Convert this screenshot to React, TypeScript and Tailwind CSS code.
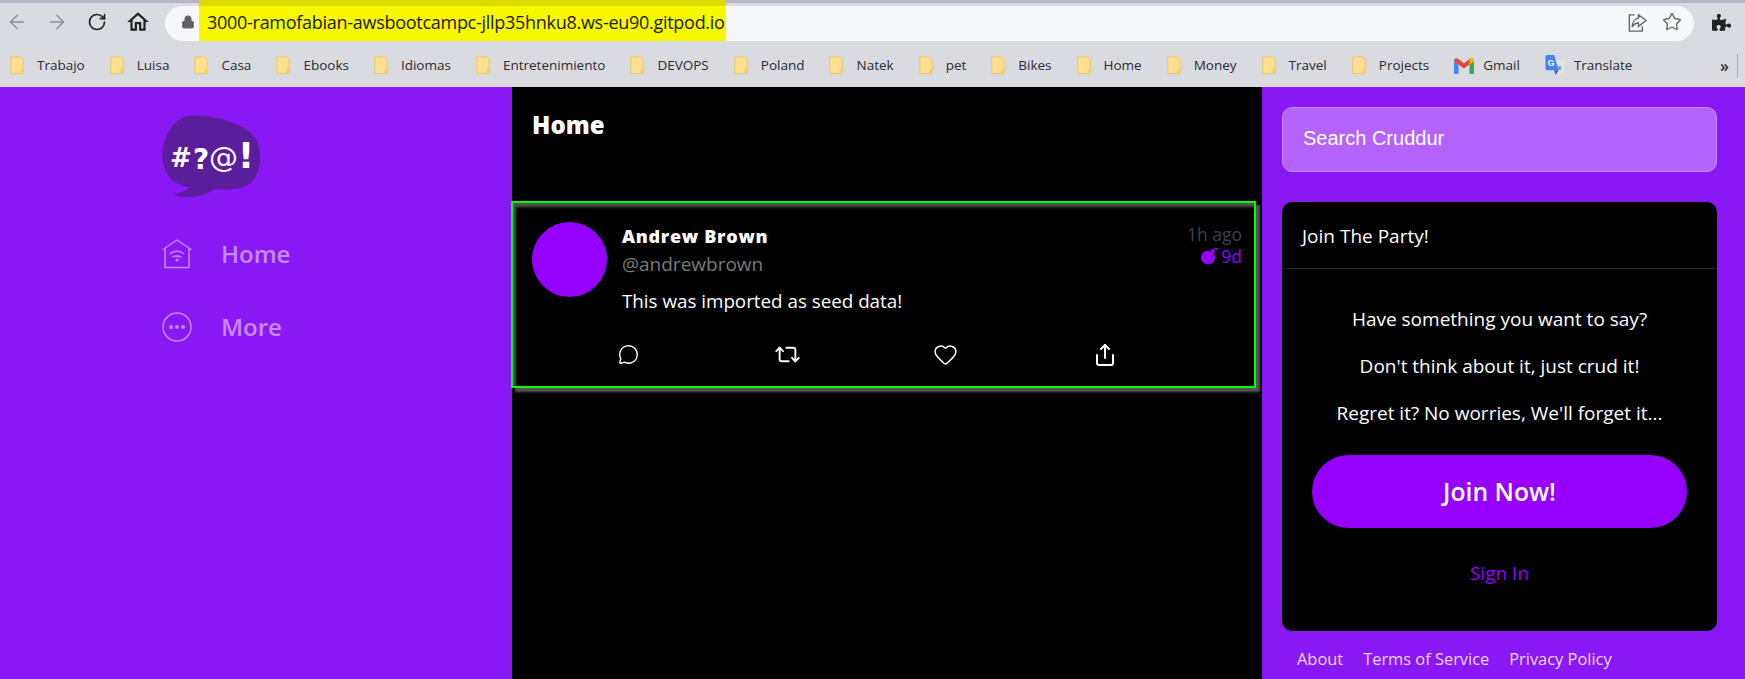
import { ArrowLeft, ArrowRight, Heart, Lock, MessageCircle, Repeat2, RotateCw, Share, Star } from "lucide-react";
import { FaPuzzlePiece } from "react-icons/fa";
import { MdOutlineHome } from "react-icons/md";

const folders = [
  "Trabajo",
  "Luisa",
  "Casa",
  "Ebooks",
  "Idiomas",
  "Entretenimiento",
  "DEVOPS",
  "Poland",
  "Natek",
  "pet",
  "Bikes",
  "Home",
  "Money",
  "Travel",
  "Projects",
];

function FolderIcon() {
  return (
    <svg viewBox="0 0 14 20" className="h-[19px] w-[14px] shrink-0">
      <path d="M0.5 1 H10.5 L13.5 3.5 V18.5 H0.5 Z" fill="#ffe08f" stroke="#e9c66c" />
      <path d="M10.5 14 H13.5 V18.5 H10.5 Z" fill="#f5cf6e" />
    </svg>
  );
}

function GmailIcon() {
  return (
    <svg viewBox="0 0 20 16" className="h-[16px] w-[20px] shrink-0">
      <path d="M0 3 V16 H4.5 V6.5 Z" fill="#4285f4" />
      <path d="M15.5 6.5 V16 H20 V3 Z" fill="#34a853" />
      <path d="M0 3 C0 0.5 2.5 -0.5 4.5 1 L10 5.5 L15.5 1 C17.5 -0.5 20 0.5 20 3 L15.5 6.5 L10 10.5 L4.5 6.5 Z" fill="#ea4335" />
      <path d="M15.5 1 C17.5 -0.5 20 0.5 20 3 L15.5 6.5 Z" fill="#fbbc04" />
    </svg>
  );
}

function TranslateIcon() {
  return (
    <svg viewBox="0 0 20 22" className="h-[21px] w-[20px] shrink-0">
      <path d="M8 5 H19 A1 1 0 0 1 20 6 V18 A1 1 0 0 1 19 19 H8 Z" fill="#dfe3ea" />
      <path d="M1.5 0 H9 L14 16 H1.5 A1.5 1.5 0 0 1 0 14.5 V1.5 A1.5 1.5 0 0 1 1.5 0 Z" fill="#4285f4" />
      <path d="M9 16 L10.5 21 L14 16 Z" fill="#3367c8" />
      <text x="2.5" y="11" fontSize="9" fontWeight="700" fill="#fff" fontFamily="Liberation Sans, sans-serif">G</text>
      <text x="13" y="16" fontSize="7" fontWeight="700" fill="#6b7280" fontFamily="Liberation Sans, sans-serif">x</text>
    </svg>
  );
}

function ShareBoxIcon() {
  return (
    <svg viewBox="0 0 24 24" className="h-[23px] w-[23px] text-[#5f6368]" fill="none" stroke="currentColor" strokeWidth="1.4">
      <path d="M9 4 H3.5 V21 H17 V16" />
      <path d="M13 4 L21 10 L13 16 V12.5 C9.5 12.5 7.5 14 6.5 17 C6.5 12 9 8 13 7.5 Z" />
    </svg>
  );
}

function Logo() {
  return (
    <svg viewBox="0 0 99 83" className="h-[83px] w-[99px]">
      <path
        d="M26 1 C40 -1 62 3 80 12 C94 19 99 30 98 46 C97 58 92 70 78 73 C70 75 60 75 53 74 C44 80 32 83 22 82 C18 82 14 81 11 79 C17 79 24 76 28 72 C14 71 4 62 1 48 C-2 30 7 5 26 1 Z"
        fill="#5a1e9d"
      />
      <g fill="#ffffff" fontFamily="DejaVu Sans, sans-serif" fontWeight="700">
        <text x="8" y="52" fontSize="26">#</text>
        <text x="31" y="54" fontSize="28">?</text>
        <text x="47" y="52" fontSize="29" fontWeight="400">@</text>
        <text x="76" y="53" fontSize="35">!</text>
      </g>
    </svg>
  );
}

function HomeWifiIcon() {
  return (
    <svg viewBox="0 0 30 30" className="h-[30px] w-[30px]" fill="none" stroke="#c68afa" strokeWidth="1.5" strokeLinejoin="round" strokeLinecap="round">
      <path d="M1 10.5 L15 1 L29 10.5" />
      <path d="M3 9.5 V28.5 H27 V9.5" />
      <path d="M8.5 14.5 C12 11.5 18 11.5 21.5 14.5" />
      <path d="M11 18 C13 16.5 17 16.5 19 18" />
      <circle cx="15" cy="21" r="0.8" fill="#c68afa" />
    </svg>
  );
}

function MoreIcon() {
  return (
    <svg viewBox="0 0 30 30" className="h-[30px] w-[30px]" fill="none" stroke="#c68afa" strokeWidth="1.5">
      <circle cx="15" cy="15" r="14" />
      <circle cx="9" cy="15" r="1.2" fill="#c68afa" />
      <circle cx="15" cy="15" r="1.2" fill="#c68afa" />
      <circle cx="21" cy="15" r="1.2" fill="#c68afa" />
    </svg>
  );
}

function BombIcon() {
  return (
    <svg viewBox="0 0 18 17" className="h-[17px] w-[18px]" fill="#9500ff">
      <circle cx="7" cy="9.5" r="7" />
      <path d="M9.5 2 L12.5 1 L14 4 L12 6 Z" />
      <path d="M12 2 C13.5 0.6 15.5 0.4 17.5 1.2" fill="none" stroke="#9500ff" strokeWidth="1.4" />
    </svg>
  );
}

export default function App() {
  return (
    <div className="flex h-screen flex-col overflow-hidden font-['Open_Sans',sans-serif] text-white">
      {/* browser chrome */}
      <div className="h-[87px] shrink-0 bg-[#dadbe0]">
        <div className="h-[3px] bg-[#b4b6c6]" />
        <div className="relative flex h-[38px] items-center">
          {/* marker highlight, darker where it crosses the toolbar */}
          <div className="absolute left-[199px] top-[-3px] h-[41px] w-[527px] bg-[#f8f800]">
            <div className="h-[6px] bg-[#dcdc00]" />
          </div>
          <div className="flex w-[165px] items-center gap-[18px] pl-[6px]">
            <ArrowLeft className="h-[22px] w-[22px] text-[#8a8d93]" strokeWidth={1.5} />
            <ArrowRight className="h-[22px] w-[22px] text-[#8a8d93]" strokeWidth={1.5} />
            <RotateCw className="ml-[1px] h-[20px] w-[20px] text-[#202124]" strokeWidth={2} />
            <MdOutlineHome className="h-[26px] w-[26px] text-[#202124]" />
          </div>
          <div className="flex h-[35px] w-[1529px] items-center rounded-full pl-[16px] pr-[12px]">
            <div className="absolute left-[165px] top-[3px] -z-0 h-[35px] w-[34px] rounded-l-full bg-[#f6f7f9]" />
            <div className="absolute left-[726px] top-[3px] h-[35px] w-[968px] rounded-r-full bg-[#f6f7f9]" />
            <Lock className="relative h-[14px] w-[14px] fill-[#5f6368] text-[#5f6368]" />
            <span className="relative ml-[12px] text-[18px] tracking-[-0.28px] text-[#202124]">
              3000-ramofabian-awsbootcampc-jllp35hnku8.ws-eu90.gitpod.io
            </span>
            <div className="relative ml-auto flex items-center gap-[13px]">
              <ShareBoxIcon />
              <Star className="h-[20px] w-[20px] text-[#5f6368]" strokeWidth={1.6} />
            </div>
          </div>
          <FaPuzzlePiece className="ml-[18px] h-[19px] w-[19px] text-[#202124]" />
        </div>
        <div className="flex h-[46px] items-center pl-[10px] pt-[3px] text-[13.5px] text-[#2b2b30]">
          <div className="flex items-center gap-[25px]">
            {folders.map((name) => (
              <div key={name} className="flex items-center gap-[13px]">
                <FolderIcon />
                <span>{name}</span>
              </div>
            ))}
            <div className="flex items-center gap-[9px]">
              <GmailIcon />
              <span>Gmail</span>
            </div>
            <div className="flex items-center gap-[9px]">
              <TranslateIcon />
              <span>Translate</span>
            </div>
          </div>
          <span className="ml-auto mr-[8px] text-[16px] font-semibold">»</span>
          <div className="mr-[7px] h-[24px] w-px bg-[#a9abb2]" />
        </div>
      </div>

      <div className="flex min-h-0 flex-1 bg-[#8a18f5]">
        {/* left nav */}
        <nav className="w-[512px] shrink-0 pl-[162px] pt-[28px]">
          <Logo />
          <div className="mt-[41px] flex h-[30px] items-center gap-[29px] text-[24px] font-semibold text-[#c68afa]">
            <HomeWifiIcon />
            <span>Home</span>
          </div>
          <div className="mt-[43px] flex h-[30px] items-center gap-[29px] text-[24px] font-semibold text-[#c68afa]">
            <MoreIcon />
            <span>More</span>
          </div>
        </nav>

        {/* feed */}
        <main className="w-[750px] shrink-0 bg-black">
          <div className="h-[114px] pl-[20px] pt-[20px] text-[24px] font-extrabold leading-[36px]">Home</div>
          <article className="ml-[-1px] flex h-[187px] w-[745px] border-2 border-[#00ff00] pl-[19px] pt-[19px] shadow-[inset_3px_4px_3px_0_#555,4px_4px_2px_0_#555]">
            <div className="h-[75px] w-[75px] shrink-0 rounded-full bg-[#9500ff]" />
            <div className="ml-[15px] flex-1">
              <div className="flex items-start justify-between pr-[12px]">
                <div>
                  <div className="mt-[-1px] text-[18px] font-extrabold leading-[30px] tracking-[0.7px]">Andrew Brown</div>
                  <div className="text-[19px] leading-[26px] text-[#7a7a7a]">@andrewbrown</div>
                </div>
                <div className="flex flex-col items-end text-[17.5px] leading-[24px]">
                  <span className="text-[#3d4156]">1h ago</span>
                  <span className="flex items-center gap-[2px] leading-[20px] text-[#9500ff]">
                    <BombIcon />
                    9d
                  </span>
                </div>
              </div>
              <div className="mt-[11px] text-[18.8px] leading-[26px]">This was imported as seed data!</div>
              <div className="mt-[27px] flex items-center">
                <div className="ml-[-4px] w-[156px]">
                  <MessageCircle className="h-[21px] w-[21px]" strokeWidth={1.6} />
                </div>
                <div className="w-[159px]">
                  <Repeat2 className="h-[27px] w-[27px]" strokeWidth={1.7} />
                </div>
                <div className="w-[160px]">
                  <Heart className="h-[25px] w-[25px]" strokeWidth={1.4} />
                </div>
                <Share className="h-[24px] w-[24px]" strokeWidth={2} />
              </div>
            </div>
          </article>
        </main>

        {/* right column */}
        <aside className="flex-1 pl-[20px] pr-[28px] pt-[20px]">
          <div className="flex h-[65px] items-center rounded-[10px] border border-[#c88dfc] bg-[#b563fd] pb-[3px] pl-[20px] font-['Liberation_Sans',sans-serif] text-[20px]">
            Search Cruddur
          </div>
          <section className="mt-[30px] h-[429px] rounded-[10px] bg-black">
            <div className="flex h-[67px] items-center border-b border-[#24242e] pl-[20px] pt-[3px] text-[19px]">Join The Party!</div>
            <div className="flex flex-col items-center pt-[36px] text-[19px] leading-[28px]">
              <p>Have something you want to say?</p>
              <p className="mt-[19px]">Don&apos;t think about it, just crud it!</p>
              <p className="mt-[19px]">Regret it? No worries, We&apos;ll forget it...</p>
              <button className="mt-[28px] h-[73px] w-[375px] rounded-full bg-[#9500ff] text-[24.7px] font-semibold">Join Now!</button>
              <a className="mt-[31px] text-[19px] text-[#9500ff]">Sign In</a>
            </div>
          </section>
          <div className="mt-[15px] flex gap-[20px] pl-[15px] text-[16.4px] leading-[26px] text-[#ead8fe]">
            <span>About</span>
            <span>Terms of Service</span>
            <span>Privacy Policy</span>
          </div>
        </aside>
      </div>
    </div>
  );
}
